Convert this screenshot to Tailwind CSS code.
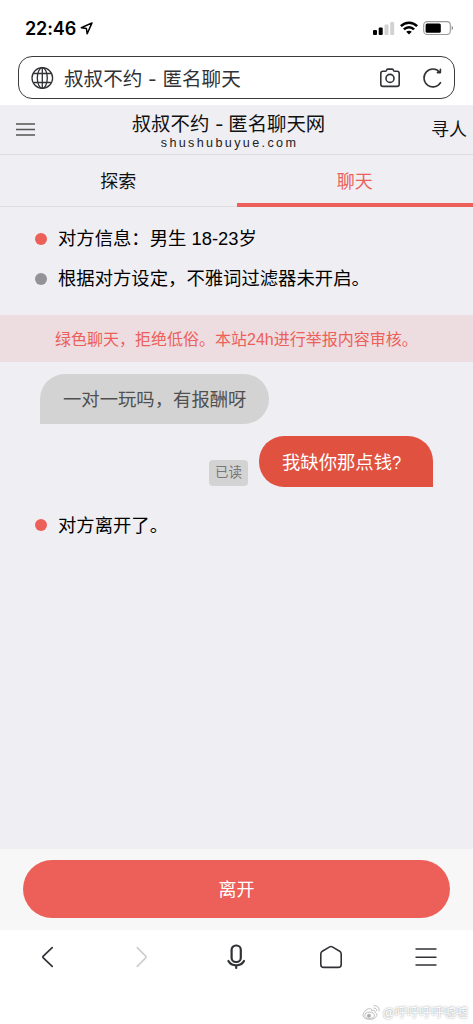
<!DOCTYPE html>
<html lang="zh-CN">
<head>
<meta charset="utf-8">
<title>叔叔不约 - 匿名聊天</title>
<script src="https://cdn.jsdelivr.net/npm/@tailwindcss/browser@4"></script>
</head>
<body class="w-[473px] h-[1024px] overflow-hidden bg-white flex flex-col text-[18.35px] text-[#111] font-['Liberation_Sans','Noto_Sans_CJK_SC',sans-serif]">
  <div class="h-14 shrink-0 flex items-center justify-between pl-[25px] pr-[19px] text-black">
    <div class="flex items-center gap-1 pt-px">
      <span class="font-['Inter',sans-serif] font-semibold text-[18px] leading-6 tracking-[-0.1px]">22:46</span>
      <svg class="size-[13px]" viewBox="0 0 13 13" fill="none" stroke="currentColor" stroke-width="1.5" stroke-linejoin="round"><path d="M12 .9 1.300 5.800l5.100.8.800 5.200z"/></svg>
    </div>
    <div class="flex items-center gap-[5px]">
      <svg class="w-[22px] h-[14px]" viewBox="0 0 22 14"><rect x="0" y="9" width="4" height="5" rx="1"/><rect x="5.700" y="6.500" width="4" height="7.500" rx="1"/><rect x="11.500" y="3.500" width="4" height="10.500" rx="1" fill="#d2d2d2"/><rect x="17.200" y="1" width="4" height="13" rx="1" fill="#d2d2d2"/></svg>
      <svg class="w-[18px] h-[14px]" viewBox="0 0 18 14" fill="none" stroke="currentColor" stroke-width="2.500"><path d="M.9 5.200C5.400.5 12.600.5 17.100 5.200M3.900 8.400c2.900-2.900 7.300-2.900 10.200 0"/><path d="M9 13.500 6.200 10.700c1.600-1.400 4-1.400 5.600 0z" fill="currentColor" stroke="none"/></svg>
      <svg class="w-[31px] h-[14px]" viewBox="0 0 31 14"><rect x=".7" y=".6" width="26.600" height="12.900" rx="3.500" fill="none" stroke="#9b9b9b" stroke-width="1.100"/><rect x="2.600" y="2.400" width="15.200" height="9.300" rx="1.500"/><path d="M28.700 4.800c1.900.8 1.900 3.700 0 4.500z" fill="#8b8b8b"/></svg>
    </div>
  </div>

  <div class="h-[49px] shrink-0 px-[18px]">
    <div class="h-[43px] rounded-[14px] border border-[#3b3b3b] flex items-center pl-3 pr-[10px] text-[#303236]">
      <svg class="size-6" viewBox="0 0 24 24" fill="none" stroke="currentColor" stroke-width="1.300"><circle cx="11.300" cy="12" r="10.300"/><ellipse cx="11.300" cy="12" rx="5" ry="10.300"/><path d="M11.300 1.700v20.600M2.500 7.500h17.600M2.500 16.500h17.600"/></svg>
      <span class="ml-[9px] mt-[2px] text-[19.600px] leading-7 whitespace-nowrap">叔叔不约<span class="inline-block w-[20px] text-center"><span class="inline-block scale-x-125">-</span></span>匿名聊天</span>
      <svg class="ml-auto w-[22px] h-5" viewBox="0 0 22 20" fill="none" stroke="currentColor" stroke-width="1.600" stroke-linejoin="round"><path d="M4 3.300h2.300q.8 0 1.100-.9.400-1.300 1.400-1.300h4.400q1 0 1.400 1.300.3.900 1.100.9H18q2.200 0 2.200 2.200v10.700q0 2.200-2.200 2.200H4q-2.200 0-2.200-2.200V5.500Q1.800 3.300 4 3.300z"/><circle cx="11" cy="10.400" r="4"/></svg>
      <svg class="ml-[21px] size-[22px]" viewBox="0 0 22 22" fill="none" stroke="currentColor" stroke-width="1.600" stroke-linecap="round" stroke-linejoin="round"><path d="M18.500 15.600A8.900 8.900 0 1 1 17.600 5.100M18.400 2.200v3.400h-3"/></svg>
    </div>
  </div>

  <header class="h-[50px] shrink-0 bg-[#efeef3] border-b border-[#dcdce1] grid grid-cols-[80px_1fr_80px] items-center">
    <svg class="ml-4 w-[19px] h-[13px]" viewBox="0 0 19 13" stroke="#555" stroke-width="1.300"><path d="M0 1h19M0 6.500h19M0 12h19"/></svg>
    <div class="flex flex-col items-center -ml-4 pt-[2px]">
      <h1 class="text-[19.400px] leading-[26px] whitespace-nowrap">叔叔不约<span class="inline-block w-[19px] text-center"><span class="inline-block scale-x-125">-</span></span>匿名聊天网</h1>
      <span class="text-[12.600px] leading-[15px] tracking-[2.350px] ml-[2px] -mt-px text-[#222]">shushubuyue.com</span>
    </div>
    <span class="text-right pr-[6px] pt-px text-[18px]">寻人</span>
  </header>

  <nav class="h-[52px] shrink-0 bg-[#efeef3] grid grid-cols-2 text-center text-[18px]">
    <span class="h-[52px] leading-[54px] border-b border-[#dcdce1]">探索</span>
    <span class="h-[52px] leading-[54px] border-b-4 border-[#ec6059] text-[#ec6059]">聊天</span>
  </nav>

  <main class="h-[642px] shrink-0 bg-[#efeef3] flex flex-col text-black">
    <div class="flex flex-col pt-3 h-[108px] pl-[35px]">
      <div class="h-10 flex items-center gap-[11px]"><i class="size-3 rounded-full bg-[#ec6059]"></i><span>对方信息：男生 18-23岁</span></div>
      <div class="h-10 flex items-center gap-[11px]"><i class="size-3 rounded-full bg-[#939395]"></i><span>根据对方设定，不雅词过滤器未开启。</span></div>
    </div>
    <div class="h-[47px] bg-[#eddde0] text-[#ec6059] text-[16px] leading-[49px] pl-[55px] whitespace-nowrap">绿色聊天，拒绝低俗。本站24h进行举报内容审核。</div>
    <div class="mt-3 ml-10 w-[229px] h-[50px] rounded-[25px] rounded-bl-none bg-[#d3d3d3] text-[#505050] leading-[52px] pl-[23px] whitespace-nowrap">一对一玩吗，有报酬呀</div>
    <div class="mt-3 mr-10 flex justify-end items-end gap-[11px]">
      <span class="mb-px w-[39px] h-[26px] rounded-[4px] bg-[#d3d3d3] text-[#777] text-[13.500px] leading-[26px] text-center">已读</span>
      <div class="w-[174px] h-[51px] rounded-[25px] rounded-br-none bg-[#e05140] text-white leading-[53px] pl-[23px] whitespace-nowrap">我缺你那点钱<span class="inline-block origin-left scale-x-90">?</span></div>
    </div>
    <div class="mt-[18px] h-10 pl-[35px] flex items-center gap-[11px]"><i class="size-3 rounded-full bg-[#ec6059]"></i><span class="pt-[2px]">对方离开了。</span></div>
  </main>

  <div class="h-[81px] shrink-0 bg-[#f7f7f7] px-[23px] pt-[11px]">
    <button class="block w-full h-[58px] rounded-full bg-[#ec6059] text-white text-[18px] pt-[2px]">离开</button>
  </div>

  <footer class="flex-1 flex flex-col justify-between text-[#303236]">
    <div class="h-[54px] grid grid-cols-5 justify-items-center items-center">
      <svg class="w-3 h-[22px]" viewBox="0 0 12 22" fill="none" stroke="currentColor" stroke-width="1.700" stroke-linecap="round" stroke-linejoin="round"><path d="M11.200 1.700 2.300 10.200q-.8.800 0 1.600l8.900 8.500"/></svg>
      <svg class="w-3 h-[22px]" viewBox="0 0 12 22" fill="none" stroke="#cecece" stroke-width="1.700" stroke-linecap="round" stroke-linejoin="round"><path d="m1.300 1.700 8.400 8.500q.8.800 0 1.600l-8.400 8.500"/></svg>
      <svg class="w-5 h-[28px]" viewBox="0 0 20 28" fill="none" stroke="currentColor" stroke-width="2.200" stroke-linecap="round"><rect x="5.600" y="2.500" width="9.200" height="16.500" rx="4.300"/><path d="M2.400 18c3.100 5.700 12.500 5.700 15.600 0M10.200 23v2"/></svg>
      <svg class="w-6 h-6" viewBox="0 0 24 24" fill="none" stroke="currentColor" stroke-width="1.600" stroke-linejoin="round"><path d="m10.700 1.900-7.400 4.300q-1.500.9-1.500 2.700v10.500q0 3 3 3h14.400q3 0 3-3V8.900q0-1.800-1.500-2.700l-7.400-4.300q-1.300-.7-2.600 0z"/></svg>
      <svg class="w-[22px] h-5" viewBox="0 0 22 20" stroke="currentColor" stroke-width="1.600"><path d="M.5 2h21M.5 10.200h21M.5 18h21"/></svg>
    </div>
    <div class="h-6 pr-[5px] flex justify-end items-center gap-[2px] text-[12.200px] leading-5 text-white text-shadow-[0_0_2px_#888]">
      <svg class="w-[19px] h-[17px]" viewBox="0 0 20 18" fill="#fff" stroke="#b3b3b3" stroke-width=".9"><path d="M8 5.200c1.700-.8 2.600.2 2.200 2 2.800-1 4.200-.2 3.400 1.600 4.500 1.900 1.200 7.500-5.300 7.500C3.800 16.300.8 14.300 1 11.600 1.200 8.800 6.500 3.400 8 5.200z"/><ellipse cx="8" cy="11.900" rx="5" ry="3.300"/><circle cx="7.300" cy="12.400" r="1.700" fill="#aaa"/><path d="M12.200 4.400c2-.5 3.700 1.200 3.200 3M12.200 1.900c3.700-.9 6.700 2.300 5.700 5.900" fill="none"/></svg>
      <span class="whitespace-nowrap pt-px">@呼呼呼呼嘘嘘</span>
    </div>
  </footer>
</body>
</html>
